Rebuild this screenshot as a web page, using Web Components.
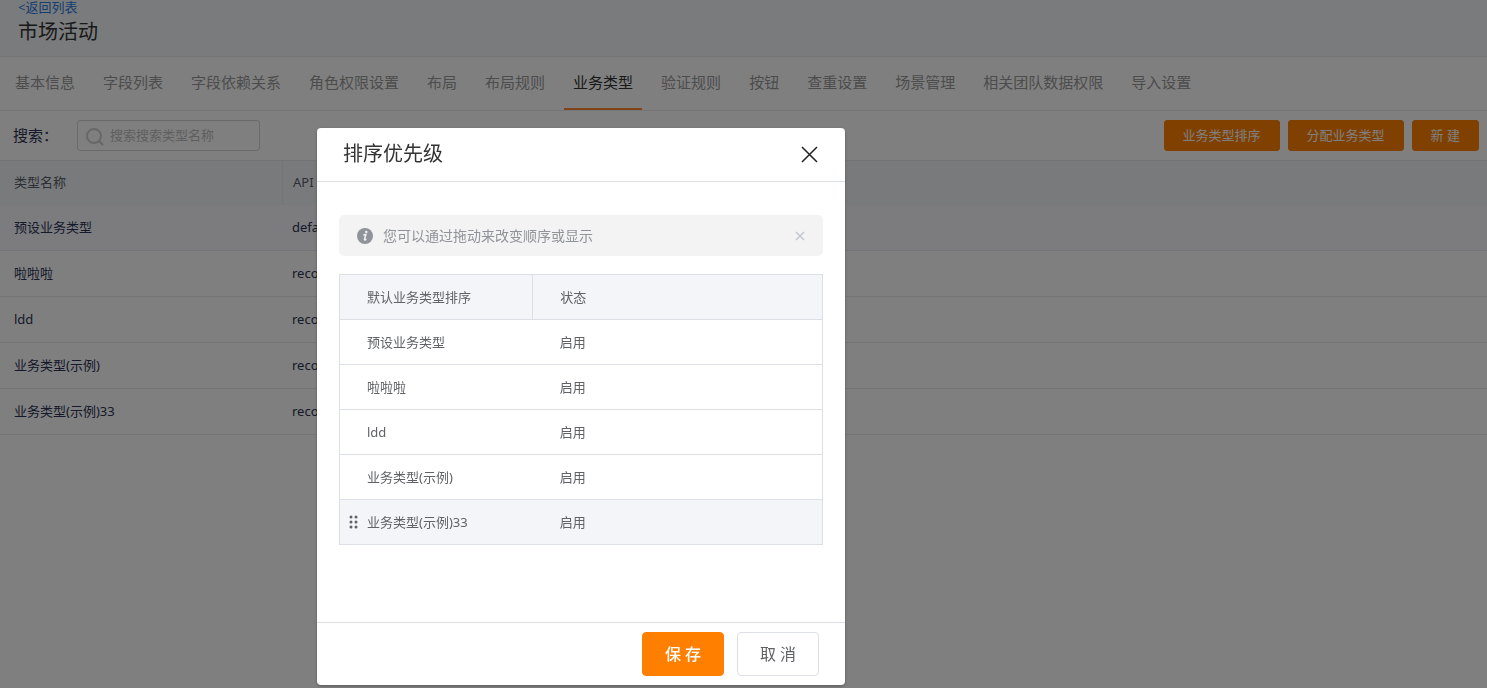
<!DOCTYPE html>
<html lang="zh-CN">
<head>
<meta charset="utf-8">
<title>市场活动</title>
<style>
html, body { margin: 0; min-height: 100vh; }
body { background: #fff; font: 13px/20px "Noto Sans", "Noto Sans CJK SC", sans-serif; color: #2a3352; }
</style>
</head>
<body>
<market-page></market-page>
<script>
const define = (name, html, setup) => customElements.define(name, class extends HTMLElement {
  constructor() {
    super();
    this.attachShadow({ mode: 'open' }).innerHTML = html;
  }
  connectedCallback() {
    if (setup && !this.ready) { this.ready = true; setup(this.shadowRoot, this); }
  }
});

const names = ['预设业务类型', '啦啦啦', 'ldd', '业务类型(示例)', '业务类型(示例)33'];

define('ui-button', `
<style>
:host { display: inline-flex; }
button { font: inherit; color: #fff; background: #ff8000; border: 1px solid #ff8000; border-radius: 3px; padding: 0 18px 2px; height: 31px; line-height: 20px; white-space: nowrap; cursor: pointer; }
:host([size=large]) button { width: 82px; height: 44px; padding: 0; border-radius: 4px; font-size: 16px; }
:host([size=large]:not([plain])) button { font-weight: 500; }
:host([plain]) button { background: #fff; color: #606266; border-color: #dcdfe6; }
</style>
<button type="button"><slot></slot></button>`);

define('page-header', `
<style>
:host { display: block; background: #f4f6f9; height: 56px; padding: 0 18px; border-bottom: 1px solid #e8eaed; }
a { display: block; width: max-content; line-height: 14px; color: #2a7be0; text-decoration: none; }
h1 { margin: 0; font-size: 20px; font-weight: 400; line-height: 36px; color: #333; }
</style>
<a href="#list">&lt;返回列表</a>
<h1><slot></slot></h1>`);

define('tab-bar', `
<style>
:host { display: block; border-bottom: 1px solid #ebebee; }
nav { display: flex; gap: 10px; padding: 0 6px; }
a { padding: 0 9px; height: 53px; line-height: 51px; box-sizing: border-box; font-size: 15px; color: #999; text-decoration: none; white-space: nowrap; }
a[aria-current] { color: #333; border-bottom: 2px solid #ff8a30; }
</style>
<nav></nav>`, root => {
  const tabs = ['基本信息', '字段列表', '字段依赖关系', '角色权限设置', '布局', '布局规则', '业务类型', '验证规则', '按钮', '查重设置', '场景管理', '相关团队数据权限', '导入设置'];
  root.querySelector('nav').innerHTML = tabs.map(t =>
    `<a href="#${t}"${t === '业务类型' ? ' aria-current="page"' : ''}>${t}</a>`).join('');
});

define('search-bar', `
<style>
:host { display: flex; align-items: center; padding: 9px 8px 9px 13px; }
label { font-size: 15px; width: 64px; padding-bottom: 2px; }
.box { display: flex; align-items: center; gap: 6px; box-sizing: border-box; width: 183px; height: 31px; padding: 0 8px; border: 1px solid #d4d4d4; border-radius: 3px; }
svg { flex: none; }
input { font: inherit; color: inherit; min-width: 0; flex: 1; border: 0; padding: 0 0 2px; outline: 0; background: none; }
input::placeholder { color: #bebebe; opacity: 1; }
.actions { margin-left: auto; display: flex; gap: 8px; }
</style>
<label for="q">搜索：</label>
<div class="box">
  <svg width="18" height="20" viewBox="0 0 18 20" fill="none" stroke="#d0d0d0" stroke-width="2"><circle cx="8" cy="10" r="7"/><path d="M13 15l4 4" stroke-width="2.4"/></svg>
  <input id="q" type="text" placeholder="搜索搜索类型名称">
</div>
<div class="actions">
  <ui-button>业务类型排序</ui-button>
  <ui-button>分配业务类型</ui-button>
  <ui-button>新 建</ui-button>
</div>`);

define('type-table', `
<style>
:host { display: block; border-top: 1px solid #e8e9f0; }
table { width: 100%; border-collapse: separate; border-spacing: 0; table-layout: fixed; }
th, td { box-sizing: border-box; text-align: left; font-weight: 400; padding: 0 14px 2px; white-space: nowrap; }
th { height: 44px; background: #f3f5f7; color: #5a5f6c; }
th:first-child { width: 283px; border-right: 1px solid #e9ebee; }
th + th { padding-left: 10px; }
td + td { padding-left: 9px; }
td { height: 46px; border-bottom: 1px solid #e6e8ed; }
tbody tr:first-child { background: #f8f8ff; }
</style>
<table>
  <thead><tr><th scope="col">类型名称</th><th scope="col">API</th></tr></thead>
  <tbody></tbody>
</table>`, root => {
  root.querySelector('tbody').innerHTML = names.map((n, i) =>
    `<tr><td>${n}</td><td>${i ? 'reco' : 'defa'}</td></tr>`).join('');
});

define('info-tip', `
<style>
:host { display: flex; align-items: center; height: 41px; padding: 0 18px; border-radius: 5px; background: #f3f3f3; color: #909399; font-size: 14px; }
.text { flex: 1; margin-left: 10px; }
svg { display: block; }
button { border: 0; background: none; padding: 0; cursor: pointer; }
</style>
<svg width="16" height="16" viewBox="0 0 16 16"><circle cx="8" cy="8" r="8" fill="#909399"/><circle cx="9.3" cy="3.9" r="1.2" fill="#f3f3f3"/><path d="M6.3 6.9l2.6-.5-1.4 5c-.1.7.6.7 1.7-.3" fill="none" stroke="#f3f3f3" stroke-width="1.5"/></svg>
<span class="text"><slot></slot></span>
<button type="button" aria-label="关闭提示"><svg width="10" height="10" viewBox="0 0 10 10" stroke="#c0c4cc" stroke-width="1.3"><path d="M1 1l8 8M9 1l-8 8"/></svg></button>`);

define('sort-table', `
<style>
:host { display: block; color: #606266; }
table { width: 100%; border-collapse: collapse; border: 1px solid #dcdfe6; table-layout: fixed; }
th, td { box-sizing: border-box; height: 45px; padding: 0; text-align: left; font-weight: 400; border-bottom: 1px solid #dcdfe6; }
th:first-child { width: 40%; border-right: 1px solid #dcdfe6; }
th:first-child, th + th, td + td { padding-left: 27px; }
th, .active { background: #f4f5f8; }
.name { display: flex; align-items: center; }
.grip { width: 27px; display: flex; justify-content: center; }
</style>
<table>
  <thead><tr><th scope="col">默认业务类型排序</th><th scope="col">状态</th></tr></thead>
  <tbody></tbody>
</table>`, root => {
  const dots = [2, 7, 12].map(y => `<circle cx="2" cy="${y}" r="1.5"/><circle cx="7" cy="${y}" r="1.5"/>`).join('');
  const grip = `<svg width="9" height="14" viewBox="0 0 9 14" fill="#606266">${dots}</svg>`;
  root.querySelector('tbody').innerHTML = names.map((n, i) => {
    const active = i === names.length - 1;
    return `<tr${active ? ' class="active"' : ''}><td><div class="name"><span class="grip">${active ? grip : ''}</span><span>${n}</span></div></td><td>启用</td></tr>`;
  }).join('');
});

define('sort-dialog', `
<style>
:host { position: fixed; inset: 0; background: rgba(0, 0, 0, .5); }
section { position: absolute; top: 128px; left: 317px; width: 528px; background: #fff; border-radius: 4px; box-shadow: 0 1px 3px rgba(0, 0, 0, .3); }
header { display: flex; align-items: center; justify-content: space-between; height: 53px; padding: 0 27px 0 26px; border-bottom: 1px solid #dedfe3; }
h2 { margin: 0; font-size: 20px; font-weight: 400; line-height: 28px; padding-bottom: 2px; color: #333; }
header button { border: 0; padding: 0; background: none; cursor: pointer; }
header svg { display: block; }
.body { display: flex; flex-direction: column; gap: 18px; padding: 33px 22px 77px; }
footer { display: flex; justify-content: flex-end; gap: 13px; padding: 9px 26px; border-top: 1px solid #dcdfe6; }
</style>
<section role="dialog" aria-labelledby="t">
  <header>
    <h2 id="t">排序优先级</h2>
    <button type="button" aria-label="关闭"><svg width="17" height="17" viewBox="0 0 17 17" stroke="#222" stroke-width="1.5"><path d="M1 1l15 15M16 1L1 16"/></svg></button>
  </header>
  <div class="body"><slot></slot></div>
  <footer>
    <ui-button size="large">保 存</ui-button>
    <ui-button size="large" plain>取 消</ui-button>
  </footer>
</section>`);

define('market-page', `
<style>:host { display: block; }</style>
<page-header>市场活动</page-header>
<tab-bar></tab-bar>
<search-bar></search-bar>
<type-table></type-table>
<sort-dialog>
  <info-tip>您可以通过拖动来改变顺序或显示</info-tip>
  <sort-table></sort-table>
</sort-dialog>`);
</script>
</body>
</html>
